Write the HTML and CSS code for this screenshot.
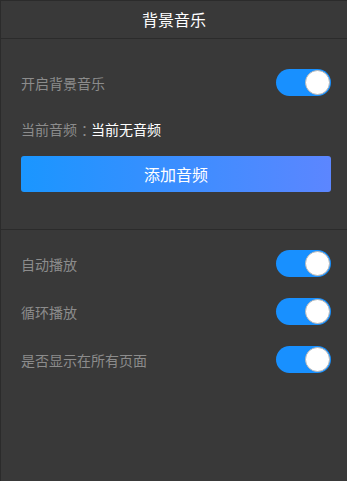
FILE: index.html
```html
<!DOCTYPE html>
<html lang="zh-CN">
<head>
  <meta charset="UTF-8" />
  <meta name="viewport" content="width=device-width, initial-scale=1.0"/>
  <title>背景音乐</title>
  <link rel="stylesheet" href="styles.css">
</head>
<body>

  <div class="panel">
    <div class="panel-header">背景音乐</div>

    <div class="section section-music">
      <div class="row">
        <span class="label">开启背景音乐</span>
        <span class="switch on"><span class="knob"></span></span>
      </div>
      <div class="current">
        <span class="label">当前音频<span class="colon">：</span></span><span class="value">当前无音频</span>
      </div>
      <button class="add-btn">添加音频</button>
    </div>

    <div class="section section-options">
      <div class="row">
        <span class="label">自动播放</span>
        <span class="switch on"><span class="knob"></span></span>
      </div>
      <div class="row">
        <span class="label">循环播放</span>
        <span class="switch on"><span class="knob"></span></span>
      </div>
      <div class="row">
        <span class="label">是否显示在所有页面</span>
        <span class="switch on"><span class="knob"></span></span>
      </div>
    </div>
  </div>

</body>
</html>
```

FILE: styles.css
```css
body {
  margin: 0;
  background: #393939;
  font-family: "Noto Sans CJK SC", "Noto Sans", sans-serif;
}

.panel {
  height: 480px;
  border-top: 1px solid #2b2b2b;
  border-left: 1px solid #2b2b2b;
  background: #393939;
}

.panel-header {
  height: 37px;
  line-height: 37px;
  text-align: center;
  font-size: 16px;
  color: #fff;
  border-bottom: 1px solid #2b2b2b;
}

.section {
  padding: 0 16px 0 20px;
  border-bottom: 1px solid #2b2b2b;
}

.section-music {
  padding-top: 30px;
  padding-bottom: 37px;
}

.section-options {
  padding-top: 20px;
  border-bottom: none;
  display: flex;
  flex-direction: column;
  gap: 21px;
}

.row {
  display: flex;
  align-items: center;
  justify-content: space-between;
  height: 27px;
}

.label {
  font-size: 14px;
  color: #8c8c8c;
}

/* full-width colon, centred in its cell */
.colon {
  padding-left: 4px;
  letter-spacing: -4px;
}

.current {
  margin-top: 22px;
  height: 20px;
  line-height: 20px;
}

.value {
  font-size: 14px;
  color: #fff;
}

.add-btn {
  display: block;
  width: 100%;
  height: 36px;
  margin-top: 18px;
  border: none;
  border-radius: 3px;
  background: linear-gradient(90deg, #1a96ff, #5c86ff);
  color: #fff;
  font-family: inherit;
  font-size: 16px;
  cursor: pointer;
}

.switch {
  position: relative;
  width: 55px;
  height: 27px;
  border-radius: 14px;
  background: #1890ff;
}

.switch .knob {
  position: absolute;
  top: 1px;
  right: 1px;
  width: 23px;
  height: 23px;
  border-radius: 50%;
  background: #fff;
  border: 1px solid #b8b8b8;
}
```
